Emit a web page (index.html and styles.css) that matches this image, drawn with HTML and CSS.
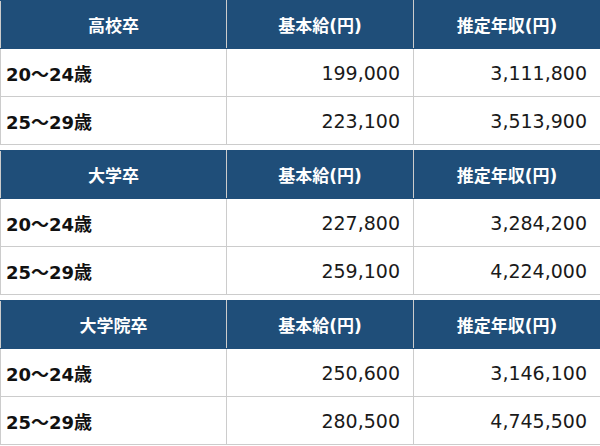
FILE: index.html
```html
<!DOCTYPE html>
<html lang="ja">
<head>
<meta charset="utf-8">
<link rel="stylesheet" href="styles.css">
<title>年収表</title>
</head>
<body>
<div class="tables">
  <table class="salary">
    <colgroup><col class="c1"><col class="c2"><col class="c3"></colgroup>
    <thead><tr><th>高校卒</th><th>基本給(円)</th><th>推定年収(円)</th></tr></thead>
    <tbody>
      <tr><td class="age">20〜24歳</td><td class="num">199,000</td><td class="num">3,111,800</td></tr>
      <tr><td class="age">25〜29歳</td><td class="num">223,100</td><td class="num">3,513,900</td></tr>
    </tbody>
  </table>
  <table class="salary">
    <colgroup><col class="c1"><col class="c2"><col class="c3"></colgroup>
    <thead><tr><th>大学卒</th><th>基本給(円)</th><th>推定年収(円)</th></tr></thead>
    <tbody>
      <tr><td class="age">20〜24歳</td><td class="num">227,800</td><td class="num">3,284,200</td></tr>
      <tr><td class="age">25〜29歳</td><td class="num">259,100</td><td class="num">4,224,000</td></tr>
    </tbody>
  </table>
  <table class="salary">
    <colgroup><col class="c1"><col class="c2"><col class="c3"></colgroup>
    <thead><tr><th>大学院卒</th><th>基本給(円)</th><th>推定年収(円)</th></tr></thead>
    <tbody>
      <tr><td class="age">20〜24歳</td><td class="num">250,600</td><td class="num">3,146,100</td></tr>
      <tr><td class="age">25〜29歳</td><td class="num">280,500</td><td class="num">4,745,500</td></tr>
    </tbody>
  </table>
</div>
</body>
</html>
```
FILE: styles.css
```css
html, body {
  margin: 0;
  padding: 0;
  background: #ffffff;
}
body {
  font-family: "DejaVu Sans", "Noto Sans CJK JP", sans-serif;
  color: #1a1a1a;
}
.tables {
  display: flex;
  flex-direction: column;
  gap: 5px;
  width: 600px;
}
.salary {
  width: 600px;
  table-layout: fixed;
  border-collapse: collapse;
}
.c1 { width: 226px; }
.c2 { width: 187px; }
.c3 { width: 187px; }
.salary th,
.salary td {
  border: 1px solid #cccccc;
  padding: 0 13px;
  height: 48px;
  box-sizing: border-box;
}
.salary th {
  background: #1f4e79;
  color: #ffffff;
  font-size: 17px;
  font-weight: bold;
  text-align: center;
  border-top-color: #1f4e79;
  border-bottom-color: #1f4e79;
}
.salary td.age {
  font-size: 18px;
  font-weight: bold;
  text-align: left;
  padding-left: 5px;
  color: #111111;
}
.salary td.num {
  font-size: 19px;
  text-align: right;
  color: #1a1a1a;
}
```
